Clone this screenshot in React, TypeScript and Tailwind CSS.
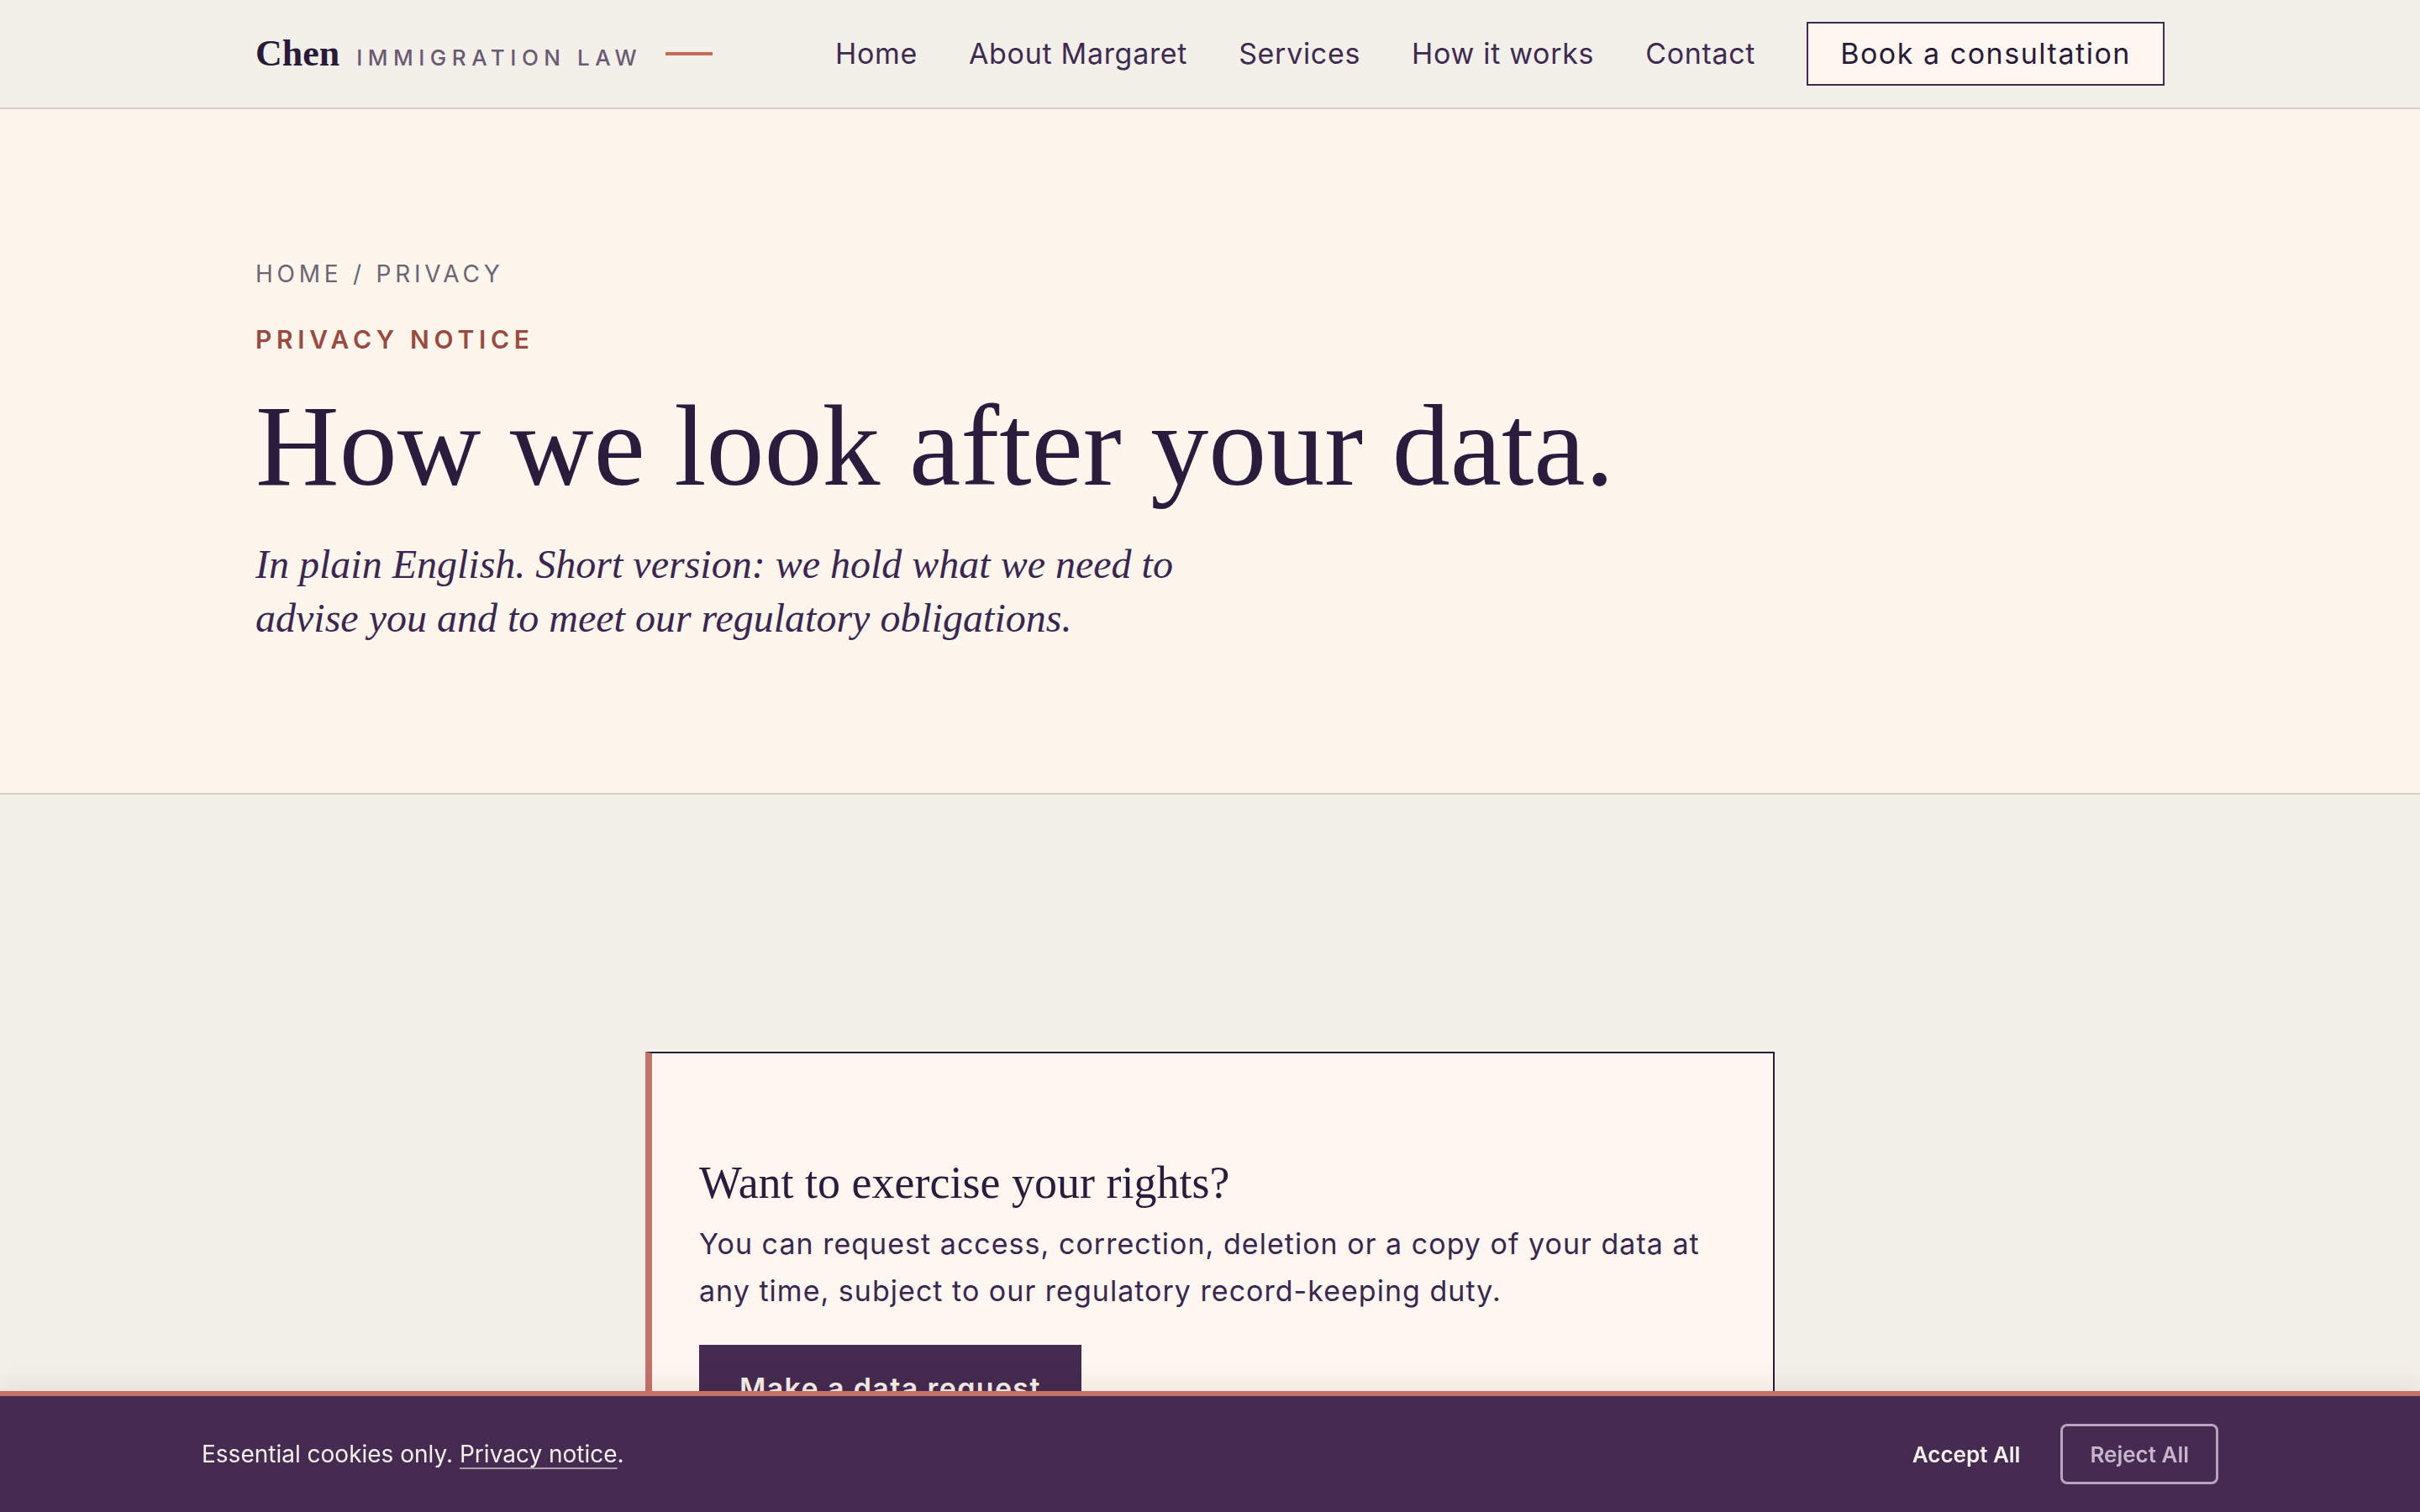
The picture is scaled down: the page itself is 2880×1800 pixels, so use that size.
import React from 'react';

const serif = { fontFamily: '"Liberation Serif", "Times New Roman", serif' };

const navLinks = ['Home', 'About Margaret', 'Services', 'How it works', 'Contact'];

function Header() {
    return (
        <header className="bg-[#f3f0e9] border-b-2 border-[#d6d0c4]">
            <div className="max-w-[2272px] mx-auto h-[128px] flex items-center justify-between">
                {/* Wordmark */}
                <a href="#" className="flex items-center">
                    <span className="flex items-baseline gap-[20px]">
                        <span className="text-[44px] font-bold text-[#2a1a3a] leading-none" style={serif}>Chen</span>
                        <span className="text-[26px] font-medium tracking-[0.25em] text-[#6b5a73] leading-none">IMMIGRATION LAW</span>
                    </span>
                    <span className="ml-[28px] block w-[56px] h-[4px] bg-[#c26a5e]" />
                </a>

                <nav className="flex items-center gap-[61px]">
                    {navLinks.map((link) => (
                        <a key={link} href="#" className="text-[34px] tracking-[0.02em] text-[#3f2b52] leading-[48px]">
                            {link}
                        </a>
                    ))}
                    <a
                        href="#"
                        className="border-2 border-[#3f2b52] bg-[#fdf7ef] px-[38px] py-[12px] text-[34px] tracking-[0.045em] text-[#2a1a3a] leading-[48px]"
                    >
                        Book a consultation
                    </a>
                </nav>
            </div>
        </header>
    );
}

function Hero() {
    return (
        <section className="bg-[#fdf6ed] border-b-2 border-[#d6d0c4]">
            <div className="max-w-[2272px] mx-auto pt-[176px] pb-[176px]">
                <p className="text-[28px] leading-[40px] tracking-[0.17em] text-[#6e6474]">
                    HOME / PRIVACY
                </p>
                <p className="mt-[38px] text-[30px] leading-[40px] font-semibold tracking-[0.19em] text-[#9b4a40]">
                    PRIVACY NOTICE
                </p>
                <h1 className="mt-[32px] text-[138px] leading-[150px] text-[#2b1b3d]" style={serif}>
                    How we look after your data.
                </h1>
                <p className="mt-[34px] max-w-[1160px] text-[48px] leading-[64px] italic text-[#3a2650]" style={serif}>
                    In plain English. Short version: we hold what we need to advise you and to meet our regulatory obligations.
                </p>
            </div>
        </section>
    );
}

function RightsCard() {
    return (
        <div className="max-w-[1344px] mx-auto bg-[#fdf7ef] border-2 border-[#2b1b3d] border-l-[8px] border-l-[#c4716a] pl-[56px] pr-[60px] pt-[122px] pb-[120px]">
            <h2 className="text-[54px] leading-[65px] text-[#2b1b3d]" style={serif}>
                Want to exercise your rights?
            </h2>
            <p className="mt-[12px] text-[34px] leading-[56px] tracking-[0.03em] text-[#3a2650]">
                You can request access, correction, deletion or a copy of your data at any time, subject to our regulatory record-keeping duty.
            </p>
            <a
                href="#"
                className="mt-[36px] inline-block bg-[#452a51] px-[48px] py-[28px] text-[34px] leading-[48px] font-semibold tracking-[0.04em] text-[#f7efe9]"
            >
                Make a data request
            </a>
        </div>
    );
}

function CookieBanner() {
    return (
        <div className="fixed bottom-0 inset-x-0 h-[144px] bg-[#452a51] border-t-[6px] border-[#c4716a] shadow-[0_-8px_28px_rgba(60,40,30,0.08)]">
            <div className="h-full px-[240px] flex items-center justify-between">
                <p className="text-[28px] text-[#f7efe9]">
                    Essential cookies only.{' '}
                    <a href="#" className="underline decoration-2 decoration-[#f7efe9]/60 underline-offset-[6px]">
                        Privacy notice
                    </a>
                    .
                </p>
                <div className="flex items-center gap-[48px]">
                    <button className="text-[26px] font-semibold text-[#f7efe9]">Accept All</button>
                    <button className="h-[72px] px-[32px] rounded-lg border-[3px] border-[#b9a3bf] text-[26px] font-semibold text-[#c9b4cc]">
                        Reject All
                    </button>
                </div>
            </div>
        </div>
    );
}

export default function App() {
    return (
        <div
            className="h-screen overflow-hidden bg-[#f3f0e8]"
            style={{ fontFamily: 'Inter, "Noto Sans", sans-serif' }}
        >
            <Header />
            <Hero />
            <main className="pt-[306px] px-8">
                <RightsCard />
            </main>
            <CookieBanner />
        </div>
    );
}
